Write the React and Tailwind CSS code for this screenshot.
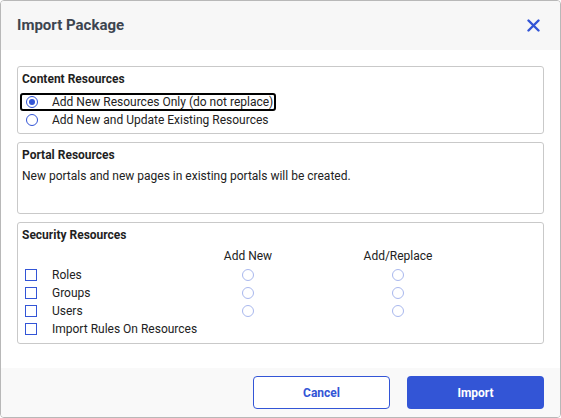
import React from 'react';

// Radio circle drawn with css
const Radio = ({ checked = false, muted = false }) => (
  <span
    className={`inline-flex h-[12px] w-[12px] shrink-0 items-center justify-center rounded-full border-[1.5px] bg-white ${
      muted ? 'border-[#a9b8ee]' : 'border-[#3355d6]'
    }`}
  >
    {checked && <span className="h-[6px] w-[6px] rounded-full bg-[#3355d6]" />}
  </span>
);

const Checkbox = () => (
  <span className="inline-block h-[12px] w-[12px] shrink-0 border-[1.5px] border-[#3355d6] bg-white" />
);

const Section = ({ title, className = '', children }) => (
  <div className={`rounded-[3px] border border-[#c9c9c9] px-[4px] pt-[4px] pb-[4px] ${className}`}>
    <div className="h-[16px] text-[12px] font-bold leading-[16px] text-[#1f1f1f]">{title}</div>
    {children}
  </div>
);

const securityRows = [
  { label: 'Roles', radios: true },
  { label: 'Groups', radios: true },
  { label: 'Users', radios: true },
  { label: 'Import Rules On Resources', radios: false },
];

export default function App() {
  return (
    <div
      className="flex h-[418px] w-[561px] flex-col overflow-hidden rounded-[4px] border border-[#b8b8b8] bg-white text-[#222]"
      style={{ fontFamily: 'Roboto, "Liberation Sans", sans-serif' }}
    >
      {/* header */}
      <div className="flex h-[49px] shrink-0 items-center justify-between bg-[#f7f7f7] pl-[16px] pr-[20px]">
        <h1 className="text-[15px] font-bold text-[#3d4550]">Import Package</h1>
        <svg width="13" height="13" viewBox="0 0 13 13" className="text-[#3355d6]">
          <path d="M1.5 1.5 L11.5 11.5 M11.5 1.5 L1.5 11.5" stroke="currentColor" strokeWidth="2.4" strokeLinecap="round" />
        </svg>
      </div>

      {/* body */}
      <div className="flex flex-1 flex-col gap-[8px] px-[16px] pt-[16px]">
        <Section title="Content Resources" className="h-[68px]">
          <div className="mt-[6px] flex flex-col items-start">
            <label className="-ml-[2px] inline-flex h-[18px] items-center gap-[14px] whitespace-nowrap rounded-[3px] border-2 border-black pl-[4px] pr-[1px] text-[12px]">
              <Radio checked />
              <span>Add New Resources Only (do not replace)</span>
            </label>
            <label className="inline-flex h-[18px] items-center gap-[14px] whitespace-nowrap pl-[4px] text-[12px]">
              <Radio />
              <span>Add New and Update Existing Resources</span>
            </label>
          </div>
        </Section>

        <Section title="Portal Resources" className="h-[72px]">
          <p className="mt-[5px] text-[12px] leading-[16px]">New portals and new pages in existing portals will be created.</p>
        </Section>

        <Section title="Security Resources" className="h-[122px]">
          <div className="mt-[5px] grid grid-cols-[182px_88px_212px] text-[12px]">
            <div className="h-[18px]" />
            <div className="h-[18px] text-center leading-[16px]">Add New</div>
            <div className="h-[18px] text-center leading-[16px]">Add/Replace</div>
            {securityRows.map((r) => (
              <React.Fragment key={r.label}>
                <div className="flex h-[18px] items-center gap-[15px] whitespace-nowrap pl-[3px]">
                  <Checkbox />
                  <span>{r.label}</span>
                </div>
                <div className="flex h-[18px] items-center justify-center">{r.radios && <Radio muted />}</div>
                <div className="flex h-[18px] items-center justify-center">{r.radios && <Radio muted />}</div>
              </React.Fragment>
            ))}
          </div>
        </Section>
      </div>

      {/* footer */}
      <div className="flex h-[49px] shrink-0 items-center justify-end gap-[17px] bg-[#f9f9f9] pr-[16px]">
        <button className="h-[33px] w-[137px] rounded-[4px] border border-[#3355d6] bg-white text-[12px] font-bold text-[#3355d6]">
          Cancel
        </button>
        <button className="h-[33px] w-[137px] rounded-[4px] bg-[#3355d6] text-[12px] font-bold text-white">Import</button>
      </div>
    </div>
  );
}
